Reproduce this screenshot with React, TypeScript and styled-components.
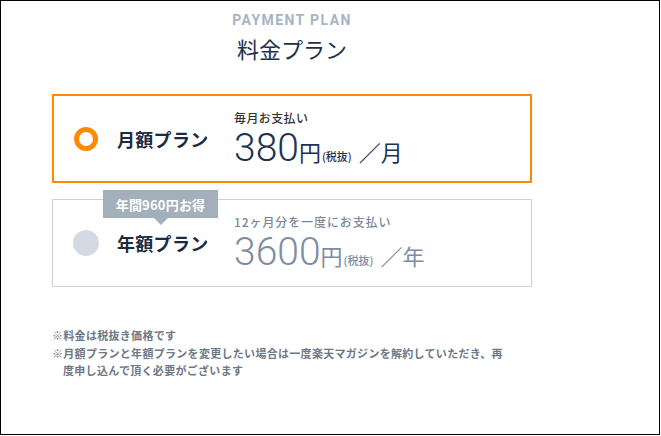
import React from "react";
import styled, { createGlobalStyle } from "styled-components";

const GlobalStyle = createGlobalStyle`
  html, body {
    margin: 0;
    padding: 0;
    background: #fff;
  }
  body {
    font-family: "Noto Sans CJK JP", "Noto Sans", sans-serif;
  }
`;

interface Plan {
  name: string;
  note: string;
  price: string;
  unit: string;
  selected: boolean;
  badge?: string;
}

const plans: Plan[] = [
  { name: "月額プラン", note: "毎月お支払い", price: "380", unit: "月", selected: true },
  {
    name: "年額プラン",
    note: "12ヶ月分を一度にお支払い",
    price: "3600",
    unit: "年",
    selected: false,
    badge: "年間960円お得"
  }
];

export default function App() {
  return (
    <>
      <GlobalStyle />
      <Frame>
        <Column>
          <Header>
            <Eyebrow>PAYMENT PLAN</Eyebrow>
            <Title>料金プラン</Title>
          </Header>
          <Plans>
            {plans.map(plan => (
              <Card key={plan.name} $selected={plan.selected}>
                {plan.badge && <Badge>{plan.badge}</Badge>}
                <Radio $selected={plan.selected} />
                <PlanName>{plan.name}</PlanName>
                <PriceBlock>
                  <PayNote $selected={plan.selected}>{plan.note}</PayNote>
                  <PriceRow $selected={plan.selected}>
                    <Amount>{plan.price}</Amount>
                    <Yen>円</Yen>
                    <Tax>(税抜)</Tax>
                    <Per>／{plan.unit}</Per>
                  </PriceRow>
                </PriceBlock>
              </Card>
            ))}
          </Plans>
          <Notes>
            <Note>※料金は税抜き価格です</Note>
            <Note>
              ※月額プランと年額プランを変更したい場合は一度楽天マガジンを解約していただき、再度申し込んで頂く必要がございます
            </Note>
          </Notes>
        </Column>
      </Frame>
    </>
  );
}

const Frame = styled("div")`
  box-sizing: border-box;
  width: 660px;
  height: 435px;
  border: 1px solid #000;
  padding: 0 0 0 51px;
`;

const Column = styled("div")`
  width: 480px;
`;

const Header = styled("div")`
  display: flex;
  flex-direction: column;
  align-items: center;
  padding-top: 10px;
`;

const Eyebrow = styled("div")`
  font-family: Roboto, "Noto Sans", sans-serif;
  font-weight: 700;
  font-size: 14px;
  line-height: 18px;
  letter-spacing: 1.4px;
  color: #a7b4c5;
`;

const Title = styled("h1")`
  margin: 3px 0 0;
  font-size: 22px;
  line-height: 32px;
  font-weight: 400;
  color: #1d2f49;
`;

const Plans = styled("div")`
  display: flex;
  flex-direction: column;
  gap: 16px;
  margin-top: 30px;
`;

const Card = styled("div")<{ $selected: boolean }>`
  position: relative;
  box-sizing: border-box;
  height: ${p => (p.$selected ? "89px" : "88px")};
  display: flex;
  align-items: center;
  padding-left: ${p => (p.$selected ? "19px" : "20px")};
  border: ${p => (p.$selected ? "2px solid #ff8a00" : "1px solid #cdd1d6")};
  background: #fff;
`;

const Badge = styled("div")`
  position: absolute;
  left: 50px;
  top: -10px;
  width: 115px;
  height: 28px;
  display: flex;
  align-items: center;
  justify-content: center;
  background: #a4afbc;
  color: #fff;
  font-size: 13px;
  font-weight: 700;
  letter-spacing: 0.2px;

  &::after {
    content: "";
    position: absolute;
    left: 50%;
    bottom: -7px;
    margin-left: -7px;
    border-left: 7px solid transparent;
    border-right: 7px solid transparent;
    border-top: 7px solid #a4afbc;
  }
`;

const Radio = styled("span")<{ $selected: boolean }>`
  box-sizing: border-box;
  flex: none;
  width: ${p => (p.$selected ? "24px" : "26px")};
  height: ${p => (p.$selected ? "24px" : "26px")};
  margin: ${p => (p.$selected ? "0 1px" : "0")};
  border-radius: 50%;
  background: ${p => (p.$selected ? "#fff" : "#d3dae3")};
  border: ${p => (p.$selected ? "5px solid #ff8a00" : "none")};
`;

const PlanName = styled("div")`
  width: 117px;
  margin-left: 18px;
  font-size: 18px;
  font-weight: 700;
  letter-spacing: 0.3px;
  color: #1c2b3f;
`;

const PriceBlock = styled("div")`
  display: flex;
  flex-direction: column;
`;

const PayNote = styled("div")<{ $selected: boolean }>`
  font-size: 12px;
  line-height: 18px;
  font-weight: 500;
  letter-spacing: ${p => (p.$selected ? "0.4px" : "0.9px")};
  color: ${p => (p.$selected ? "#333" : "#7b8797")};
`;

const PriceRow = styled("div")<{ $selected: boolean }>`
  display: flex;
  align-items: baseline;
  height: 42px;
  color: ${p => (p.$selected ? "#1d3352" : "#7d8ca0")};
`;

const Amount = styled("span")`
  font-family: Roboto, "Noto Sans", sans-serif;
  font-weight: 300;
  font-size: 39px;
  line-height: 42px;
`;

const Yen = styled("span")`
  font-size: 22px;
`;

const Tax = styled("span")`
  font-size: 11px;
  font-weight: 500;
  margin-left: 1px;
`;

const Per = styled("span")`
  font-size: 22px;
  margin-left: 7px;
`;

const Notes = styled("div")`
  margin-top: 40px;
  width: 460px;
  display: flex;
  flex-direction: column;
`;

const Note = styled("p")`
  margin: 0;
  padding-left: 11px;
  text-indent: -11px;
  font-size: 11px;
  line-height: 17.5px;
  font-weight: 700;
  letter-spacing: 0.3px;
  color: #6e7886;
`;
